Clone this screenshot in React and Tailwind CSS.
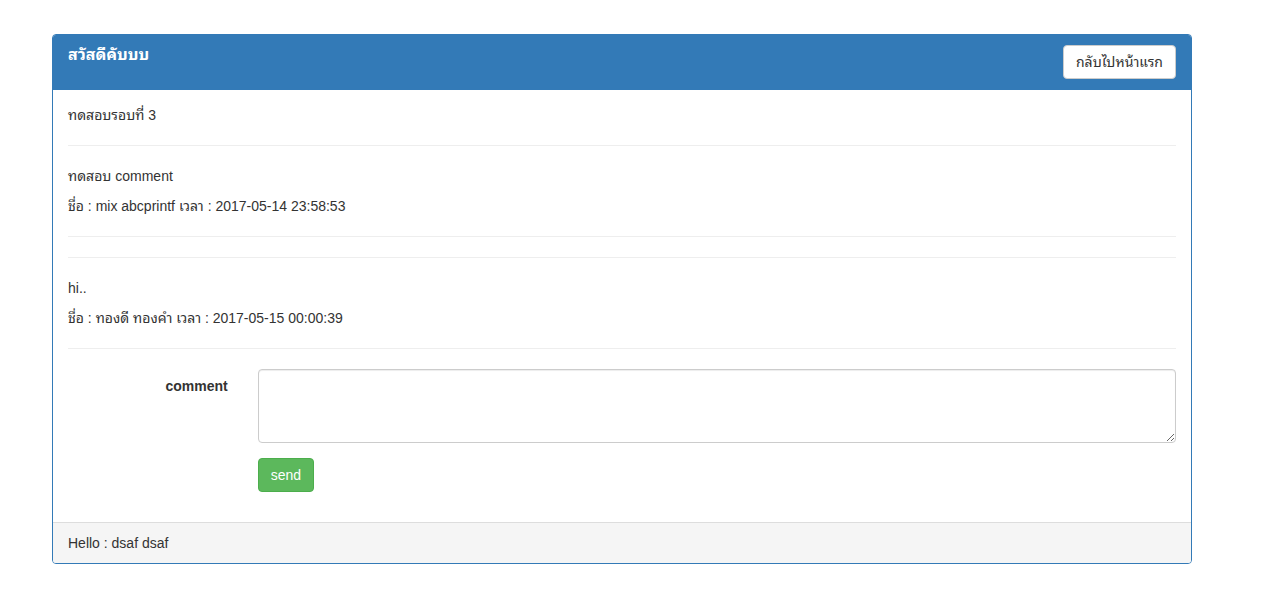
export default function App() {
  return (
    <div
      className="min-h-[594px] bg-white pt-[34px] text-[14px] leading-[20px] text-[#333]"
      style={{ fontFamily: '"Liberation Sans", Arial, "Noto Sans Thai Looped", "Noto Sans Thai", "Noto Sans", sans-serif' }}
    >
      <div className="ml-[52px] w-[1140px] rounded-[4px] border border-[#337ab7] bg-white">
        <div className="flex items-start justify-between rounded-t-[3px] border-b border-[#337ab7] bg-[#337ab7] px-[15px] py-[10px] text-white">
          <h3 className="m-0 pt-[1px] text-[16px] font-bold leading-[17.6px]">สวัสดีคับบบ</h3>
          <button className="h-[34px] rounded-[4px] border border-[#ccc] bg-white px-[12px] py-[6px] text-[14px] leading-[20px] text-[#333]">
            กลับไปหน้าแรก
          </button>
        </div>
        <div className="p-[15px]">
          <p className="m-0">ทดสอบรอบที่ 3</p>
          <hr className="my-[20px] border-0 border-t border-[#eee]" />
          <p className="m-0 mb-[10px]">ทดสอบ comment</p>
          <p className="m-0">ชื่อ : mix abcprintf เวลา : 2017-05-14 23:58:53</p>
          <hr className="mt-[20px] border-0 border-t border-[#eee]" />
          <hr className="my-[20px] border-0 border-t border-[#eee]" />
          <p className="m-0 mb-[10px]">hi..</p>
          <p className="m-0">ชื่อ : ทองดี ทองคำ เวลา : 2017-05-15 00:00:39</p>
          <hr className="my-[20px] border-0 border-t border-[#eee]" />
          <div className="-mx-[15px] mb-[15px] flex">
            <label className="w-[16.6667%] px-[15px] pt-[7px] text-right font-bold">comment</label>
            <div className="w-[83.3333%] px-[15px]">
              <textarea className="block h-[74px] w-full rounded-[4px] border border-[#ccc] px-[12px] py-[6px] shadow-[inset_0_1px_1px_rgba(0,0,0,0.075)] outline-none" />
            </div>
          </div>
          <div className="-mx-[15px] mb-[15px] flex">
            <div className="ml-[16.6667%] px-[15px]">
              <button className="h-[34px] rounded-[4px] border border-[#4cae4c] bg-[#5cb85c] px-[12px] py-[6px] text-[14px] leading-[20px] text-white">
                send
              </button>
            </div>
          </div>
        </div>
        <div className="rounded-b-[3px] border-t border-[#ddd] bg-[#f5f5f5] px-[15px] py-[10px]">
          Hello : dsaf dsaf
        </div>
      </div>
    </div>
  );
}
